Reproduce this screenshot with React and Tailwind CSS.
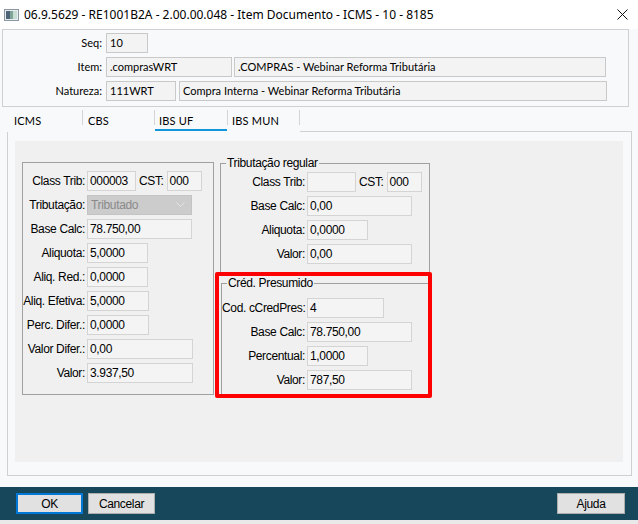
import React from 'react'

const UI = { fontFamily: "Lato, 'Noto Sans', sans-serif" }
const TITLE = { fontFamily: "'Noto Sans', 'Open Sans', sans-serif" }
const NARROW = { fontFamily: "'Liberation Sans', Arial, sans-serif" }

function TopBox({ w, children }) {
  return (
    <div className={`h-[20px] ${w} border border-[#c9c9c9] bg-[#f3f3f3] pl-[3px] flex items-center text-[11px] text-black whitespace-nowrap overflow-hidden`}>
      {children}
    </div>
  )
}

function Box({ w, children }) {
  return (
    <div className={`h-[20px] ${w} border border-[#d4d4d4] bg-[#f4f4f4] pl-[2px] flex items-center text-[12px] tracking-[-0.35px] text-black whitespace-nowrap overflow-hidden`}>
      {children}
    </div>
  )
}

function Row({ label, lw, children }) {
  return (
    <div className="flex items-center h-[20px] gap-[2px]">
      <div className={`${lw} text-right text-[12px] tracking-[-0.35px] text-black whitespace-nowrap`}>{label}</div>
      {children}
    </div>
  )
}

function Legend({ children }) {
  return (
    <div className="absolute left-[5px] top-[-9px] px-[1px] bg-[#f0f0f0] text-[12px] tracking-[-0.35px] leading-[16px] text-black whitespace-nowrap">
      {children}
    </div>
  )
}

function Tab({ w, pl, active, children }) {
  return (
    <div className={`relative h-full ${w} ${pl} pt-[3px] flex items-center text-[11px] text-black tracking-[0.2px]`}>
      {children}
      {active && <span className="absolute left-0 right-0 bottom-[1px] h-[2px] bg-[#1296db]" />}
    </div>
  )
}

const Sep = () => <div className="w-px h-[15px] mt-[3px] bg-[#d4d4d4]" />

function Btn({ w, primary, children }) {
  return (
    <button
      style={NARROW}
      className={`h-[21px] ${w} bg-[#e1e1e1] text-[12px] tracking-[-0.35px] text-black flex items-center justify-center ${primary ? 'border-2 border-[#0078d7]' : 'border border-[#adadad]'}`}
    >
      {children}
    </button>
  )
}

export default function App() {
  return (
    <div className="relative w-[638px] h-[524px] overflow-hidden bg-[#f8f9fb] flex flex-col" style={UI}>
      {/* title bar */}
      <div className="h-[29px] bg-white flex items-center pl-[4px] pr-[10px] shrink-0">
        <svg width="15" height="12" viewBox="0 0 15 12" className="shrink-0">
          <rect x="0.5" y="0.5" width="14" height="11" fill="#e8eef0" stroke="#8a97a3" />
          <rect x="2" y="2" width="4" height="8" fill="#4f6577" />
          <rect x="6" y="2" width="3" height="8" fill="#7fa596" />
          <rect x="9" y="2" width="4" height="8" fill="#c9ddd5" />
        </svg>
        <div className="ml-[5px] text-[12px] text-black whitespace-nowrap" style={TITLE}>
          06.9.5629 - RE1001B2A - 2.00.00.048 - Item Documento - ICMS - 10 - 8185
        </div>
        <svg width="11" height="11" viewBox="0 0 11 11" className="ml-auto">
          <path d="M0.5 0.5 L10.5 10.5 M10.5 0.5 L0.5 10.5" stroke="#111" strokeWidth="1" />
        </svg>
      </div>

      {/* header fields */}
      <div className="ml-[2px] w-[627px] h-[78px] border border-[#d0d0d0] pt-[3px] pl-[2px] flex flex-col gap-[4px] shrink-0">
        <div className="flex items-center h-[20px] gap-[4px]">
          <div className="w-[97px] text-right text-[11px]">Seq:</div>
          <TopBox w="w-[42px]">10</TopBox>
        </div>
        <div className="flex items-center h-[20px] gap-[4px]">
          <div className="w-[97px] text-right text-[11px]">Item:</div>
          <TopBox w="w-[126px]">.comprasWRT</TopBox>
          <div className="-ml-[2px]">
            <TopBox w="w-[372px]">.COMPRAS - Webinar Reforma Tributária</TopBox>
          </div>
        </div>
        <div className="flex items-center h-[20px] gap-[4px]">
          <div className="w-[97px] text-right text-[11px]">Natureza:</div>
          <TopBox w="w-[70px]">111WRT</TopBox>
          <div className="-ml-[1px]">
            <TopBox w="w-[428px]">Compra Interna - Webinar Reforma Tributária</TopBox>
          </div>
        </div>
      </div>

      {/* tabs */}
      <div className="ml-[7px] w-[625px] h-[25px] flex shrink-0">
        <Tab w="w-[75px]" pl="pl-[7px]">ICMS</Tab>
        <Sep />
        <Tab w="w-[71px]" pl="pl-[5px]">CBS</Tab>
        <Sep />
        <Tab w="w-[72px]" pl="pl-[4px]" active>IBS UF</Tab>
        <Sep />
        <Tab w="w-[71px]" pl="pl-[4px]">IBS MUN</Tab>
        <Sep />
        <div className="flex-1 border-b border-[#d0d0d0]" />
      </div>

      {/* tab panel */}
      <div className="ml-[7px] w-[625px] h-[344px] border border-t-0 border-[#d0d0d0] pt-[9px] pl-[7px] shrink-0">
        <div className="w-[608px] h-[321px] bg-[#f0f0f0] flex items-start pl-[7px] pt-[21px]" style={NARROW}>
          {/* left group */}
          <div className="w-[192px] h-[233px] border border-[#a0a0a0] pt-[8px] flex flex-col gap-[4px]">
            <Row label="Class Trib:" lw="w-[62px]">
              <Box w="w-[49px]">000003</Box>
              <div className="ml-[1px] text-[12px] tracking-[-0.35px]">CST:</div>
              <div className="ml-[1px]"><Box w="w-[35px]">000</Box></div>
            </Row>
            <Row label="Tributação:" lw="w-[62px]">
              <div className="h-[20px] w-[105px] border border-[#c4c4c4] bg-[#cccccc] pl-[3px] pr-[6px] flex items-center justify-between text-[12px] tracking-[-0.35px] text-[#8a8a8a]">
                Tributado
                <svg width="9" height="6" viewBox="0 0 9 6">
                  <path d="M0.5 0.5 L4.5 4.5 L8.5 0.5" fill="none" stroke="#e4e4e4" strokeWidth="1" />
                </svg>
              </div>
            </Row>
            <Row label="Base Calc:" lw="w-[62px]"><Box w="w-[105px]">78.750,00</Box></Row>
            <Row label="Aliquota:" lw="w-[62px]"><Box w="w-[61px]">5,0000</Box></Row>
            <Row label="Aliq. Red.:" lw="w-[62px]"><Box w="w-[61px]">0,0000</Box></Row>
            <Row label="Aliq. Efetiva:" lw="w-[62px]"><Box w="w-[62px]">5,0000</Box></Row>
            <Row label="Perc. Difer.:" lw="w-[62px]"><Box w="w-[62px]">0,0000</Box></Row>
            <Row label="Valor Difer.:" lw="w-[62px]"><Box w="w-[106px]">0,00</Box></Row>
            <Row label="Valor:" lw="w-[62px]"><Box w="w-[106px]">3.937,50</Box></Row>
          </div>

          {/* right column */}
          <div className="ml-[1px] w-[218px] flex flex-col">
            <div className="relative ml-[5px] mt-[1px] w-[210px] h-[109px] border border-b-0 border-[#a0a0a0] pt-[8px] flex flex-col gap-[4px]">
              <Legend>Tributação regular</Legend>
              <Row label="Class Trib:" lw="w-[84px]">
                <Box w="w-[49px]">&nbsp;</Box>
                <div className="ml-[1px] text-[12px] tracking-[-0.35px]">CST:</div>
                <div className="ml-[1px]"><Box w="w-[35px]">000</Box></div>
              </Row>
              <Row label="Base Calc:" lw="w-[84px]"><Box w="w-[105px]">0,00</Box></Row>
              <Row label="Aliquota:" lw="w-[84px]"><Box w="w-[61px]">0,0000</Box></Row>
              <Row label="Valor:" lw="w-[84px]"><Box w="w-[105px]">0,00</Box></Row>
            </div>

            <div className="w-[217px] h-[126px] border-[4px] border-[#ff0000] rounded-[2px] pt-[7px] pl-[2px] overflow-hidden">
              <div className="relative w-[212px] h-[120px] border-l border-t border-[#a0a0a0] pt-[14px] flex flex-col gap-[4px]">
                <Legend>Créd. Presumido</Legend>
                <Row label="Cod. cCredPres:" lw="w-[83px]"><Box w="w-[77px]">4</Box></Row>
                <Row label="Base Calc:" lw="w-[83px]"><Box w="w-[105px]">78.750,00</Box></Row>
                <Row label="Percentual:" lw="w-[83px]"><Box w="w-[61px]">1,0000</Box></Row>
                <Row label="Valor:" lw="w-[83px]"><Box w="w-[105px]">787,50</Box></Row>
              </div>
            </div>
          </div>
        </div>
      </div>

      <div className="h-[11px] shrink-0" />

      {/* footer */}
      <div className="h-[33px] bg-[#17475a] flex items-start pt-[6px] pl-[16px] pr-[13px] gap-[5px] shrink-0">
        <Btn w="w-[67px]" primary>OK</Btn>
        <Btn w="w-[67px]">Cancelar</Btn>
        <div className="ml-auto"><Btn w="w-[68px]">Ajuda</Btn></div>
      </div>
      <div className="flex-1 bg-[#e9e9e9]" />
    </div>
  )
}
